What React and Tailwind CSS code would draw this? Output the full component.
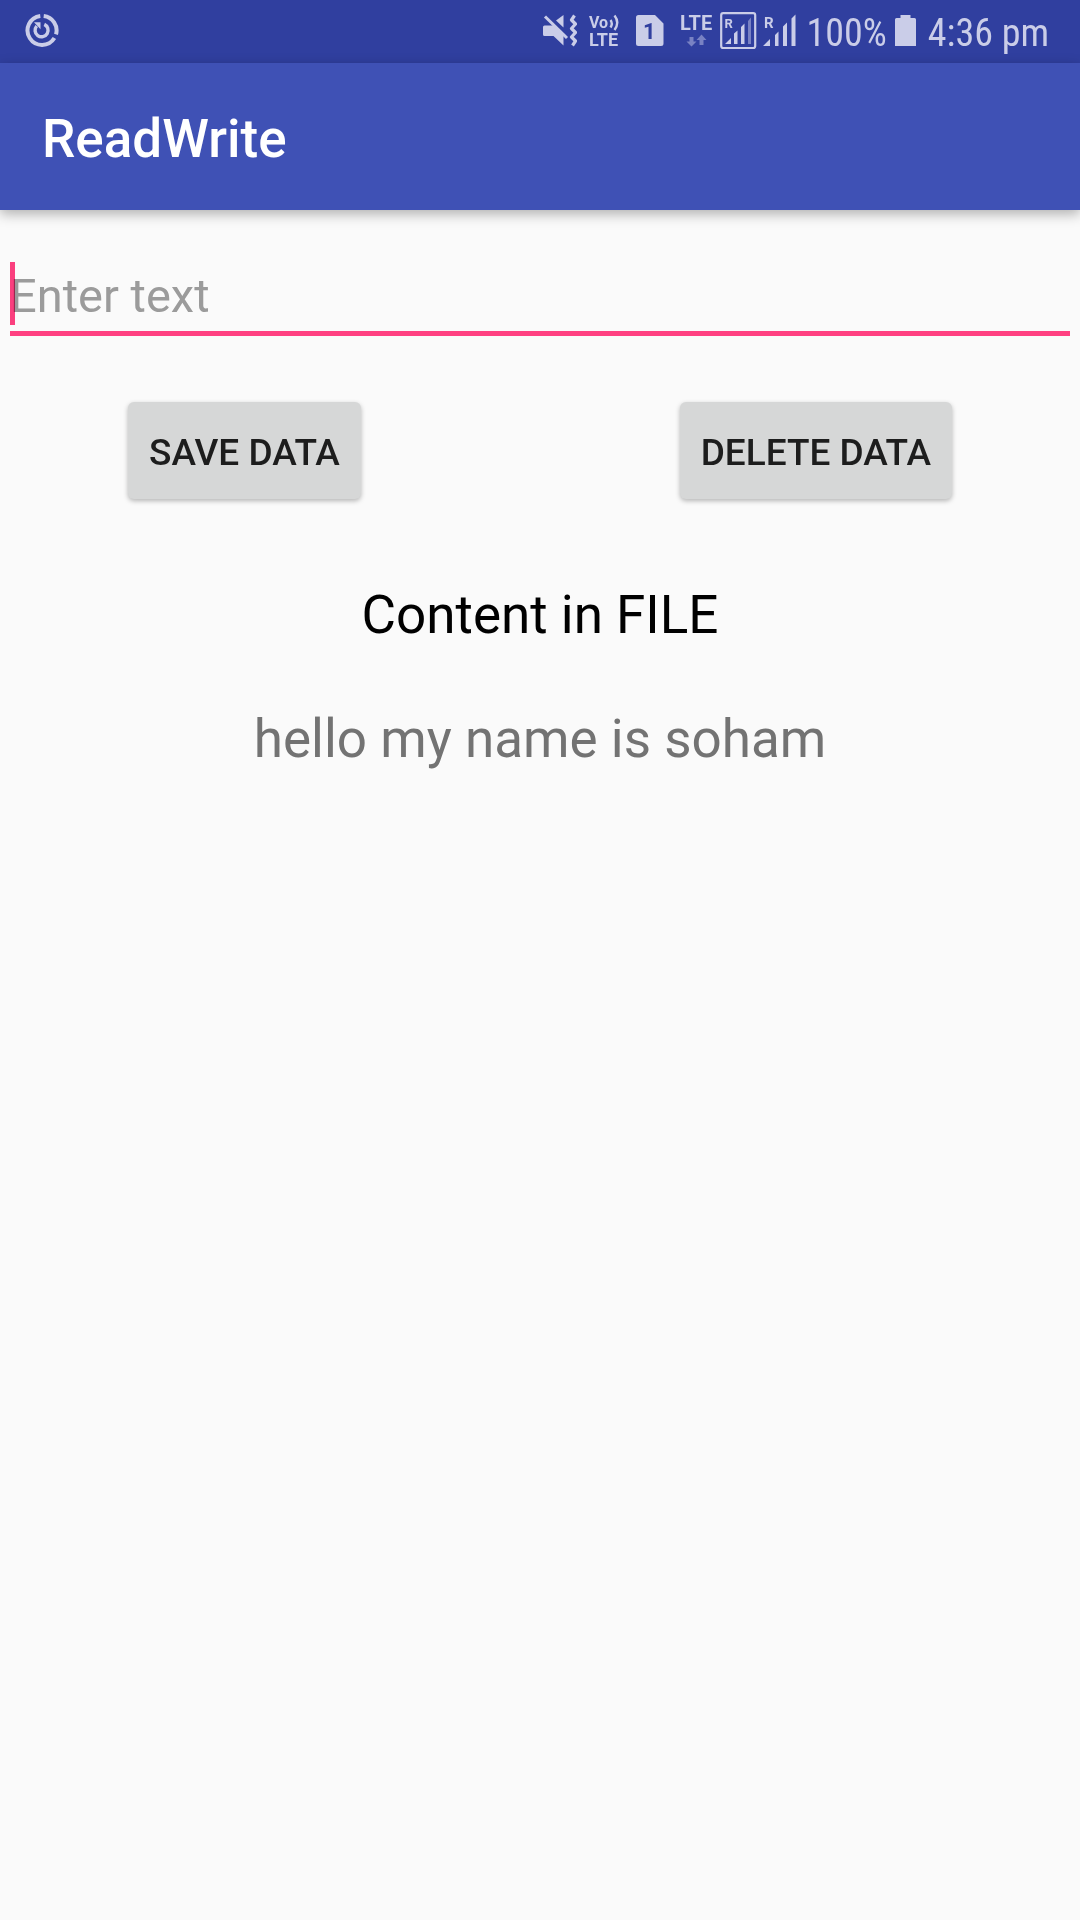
import React, { useState } from "react";

const ICON = "h-[39px] shrink-0";

function PowerIcon() {
  return (
    <svg className={ICON} width="34" height="39" viewBox="0 0 34 39" fill="none" aria-hidden="true">
      <g stroke="#cacde8" strokeWidth="4">
        <path d="M18.7 4A14.5 14.5 0 0 1 31 22.4" />
        <path d="M29.4 26A14.5 14.5 0 1 1 15.3 4" />
        <path d="M19.3 12.4A6.5 6.5 0 1 1 11.7 14" strokeWidth="3.4" />
      </g>
      <path d="M9 10.3h6.5v7z" fill="#cacde8" />
    </svg>
  );
}

function MuteIcon() {
  return (
    <svg className={ICON} width="34" height="39" viewBox="0 0 34 39" fill="none" aria-hidden="true">
      <path d="M0 15a1.500 1.500 0 0 1 1.500-1.500h9L20.500 23v10.500L10.500 24h-9a1.500 1.500 0 0 1-1.500-1.500z" fill="#cacde8" />
      <path d="M20.500 3v12.500l-7.500-7z" fill="#cacde8" />
      <path d="M2 4.500l22 21.500" stroke="#cacde8" strokeWidth="3" />
      <path d="M31.500 3.500l-3 4.500 4 4-4 4.500 4 4-4 4.500 4 4-3 4.500" stroke="#cacde8" strokeWidth="3.200" strokeLinejoin="round" />
    </svg>
  );
}

function VolteIcon() {
  return (
    <svg className={ICON} width="31" height="39" viewBox="0 0 31 39" fill="#cacde8" role="img" aria-label="VoLTE">
      <g fontFamily="Roboto, sans-serif" fontWeight="700">
        <text x="0" y="16" fontSize="16">Vo</text>
        <text x="0" y="34" fontSize="18">LTE</text>
      </g>
      <g stroke="#cacde8" strokeWidth="2.400" fill="none">
        <path d="M21.500 8q2.600 3.700 0 7.500" />
        <path d="M25.500 3.500q5.500 7 0 14.500" />
      </g>
    </svg>
  );
}

function SimIcon() {
  return (
    <svg className={ICON} width="28" height="39" viewBox="0 0 28 39" role="img" aria-label="SIM 1">
      <path d="M2.500 3h16.500l8.500 8.500v20a2.500 2.500 0 0 1-2.500 2.500h-22.500a2.500 2.500 0 0 1-2.500-2.500v-26a2.500 2.500 0 0 1 2.500-2.500z" fill="#cacde8" />
      <text x="7" y="27" fontSize="22" fontWeight="700" fontFamily="Roboto, sans-serif" fill="#303f9f">1</text>
    </svg>
  );
}

function LteIcon() {
  return (
    <svg className={ICON} width="34" height="39" viewBox="0 0 34 39" fill="#cacde8" role="img" aria-label="LTE data">
      <text x="0" y="18" fontSize="20" fontWeight="700" fontFamily="Roboto, sans-serif">LTE</text>
      <g fill="#7982c3">
        <path d="M9.500 25h4v4.500h3l-5 5-5-5h3z" />
        <path d="M19.500 33h4v-5h3l-5-5.500-5 5.500h3z" />
      </g>
    </svg>
  );
}

function BoxedSignalIcon() {
  return (
    <svg className={ICON} width="37" height="39" viewBox="0 0 37 39" fill="#cacde8" role="img" aria-label="Roaming signal, SIM 1">
      <rect x="1.200" y="1.200" width="34" height="34.800" rx="2" fill="none" stroke="#cacde8" strokeWidth="2.200" />
      <text x="4.500" y="16" fontSize="13" fontWeight="700" fontFamily="Roboto, sans-serif">R</text>
      <path d="M5 32l6-6v6zM14 32v-10.500l3.500-3V32zM21 32v-17l3.500-3.500V32z" />
      <path d="M28 32v-23l3-3.500V32z" fill="#7982c3" />
    </svg>
  );
}

function SignalIcon() {
  return (
    <svg className={ICON} width="33" height="39" viewBox="0 0 33 39" fill="#cacde8" role="img" aria-label="Roaming signal, SIM 2">
      <text x="1" y="16" fontSize="15" fontWeight="700" fontFamily="Roboto, sans-serif">R</text>
      <path d="M0 34l7-7v7zM12 34v-11l3.500-3.500V34zM20 34v-19.500l4-4V34zM28.500 34v-27.500l4-4V34z" />
    </svg>
  );
}

function BatteryIcon() {
  return (
    <svg className={ICON} width="21" height="39" viewBox="0 0 21 39" aria-hidden="true">
      <path d="M5.500 3h10v3h4a1.500 1.500 0 0 1 1.500 1.500v26.500h-21v-26.500a1.500 1.500 0 0 1 1.500-1.500h4z" fill="#cacde8" />
    </svg>
  );
}

function StatusBar() {
  return (
    <div className="flex h-[63px] items-center bg-[#303f9f] pl-[25px] pr-[31px] font-['Roboto_Condensed',Roboto,sans-serif] text-[38px] leading-[44px] text-[#cacde8]">
      <PowerIcon />
      <div className="ml-auto flex items-center">
        <div className="flex items-center">
          <MuteIcon />
          <div className="ml-3"><VolteIcon /></div>
          <div className="ml-4"><SimIcon /></div>
          <div className="ml-4"><LteIcon /></div>
          <div className="ml-1.5"><BoxedSignalIcon /></div>
          <div className="ml-1.5"><SignalIcon /></div>
        </div>
        <span className="ml-2.5 pt-0.5">100%</span>
        <div className="ml-2"><BatteryIcon /></div>
        <span className="ml-3 pt-0.5">4:36 pm</span>
      </div>
    </div>
  );
}

function ActionButton({ children, onClick }) {
  return (
    <button
      type="button"
      onClick={onClick}
      className="h-[97px] rounded-[6px] bg-[#d6d7d7] px-[21px] pt-1 text-[37px] font-medium uppercase leading-[44px] text-[#1d1d1d] shadow-[0_2px_5px_rgba(0,0,0,0.28)]"
    >
      {children}
    </button>
  );
}

export default function App() {
  const [text, setText] = useState("");
  const [content, setContent] = useState("hello my name is soham");

  return (
    <div className="min-h-screen bg-[#fafafa] font-[Roboto,sans-serif]">
      <StatusBar />
      <header className="flex h-[147px] items-center bg-[#3f51b5] px-[42px] pt-1 shadow-[0_4px_12px_rgba(0,0,0,0.3)]">
        <h1 className="text-[53px] font-medium leading-[62px] text-white">ReadWrite</h1>
      </header>
      <main>
        <div className="relative mx-2.5 mt-[52px]">
          <input
            type="text"
            aria-label="Enter text"
            placeholder="Enter text"
            value={text}
            onChange={(e) => setText(e.target.value)}
            className="block h-[74px] w-full border-b-[5px] border-[#ff4081] bg-transparent pb-0.5 text-[47px] leading-[63px] text-black caret-[#ff4081] outline-none placeholder:text-[#9b9b9b]"
          />
          {text === "" && <span className="pointer-events-none absolute left-0 top-0 h-[63px] w-[5px] bg-[#ff4081] mix-blend-multiply" />}
        </div>
        <div className="mt-[66px] flex justify-between px-32">
          <ActionButton onClick={() => setContent(text)}>Save data</ActionButton>
          <ActionButton onClick={() => setContent("")}>Delete data</ActionButton>
        </div>
        <h2 className="mt-[85px] text-center text-[53px] leading-[62px] text-black">Content in FILE</h2>
        <p className="mt-[62px] text-center text-[53px] leading-[62px] text-[#737373]">{content}</p>
      </main>
    </div>
  );
}
